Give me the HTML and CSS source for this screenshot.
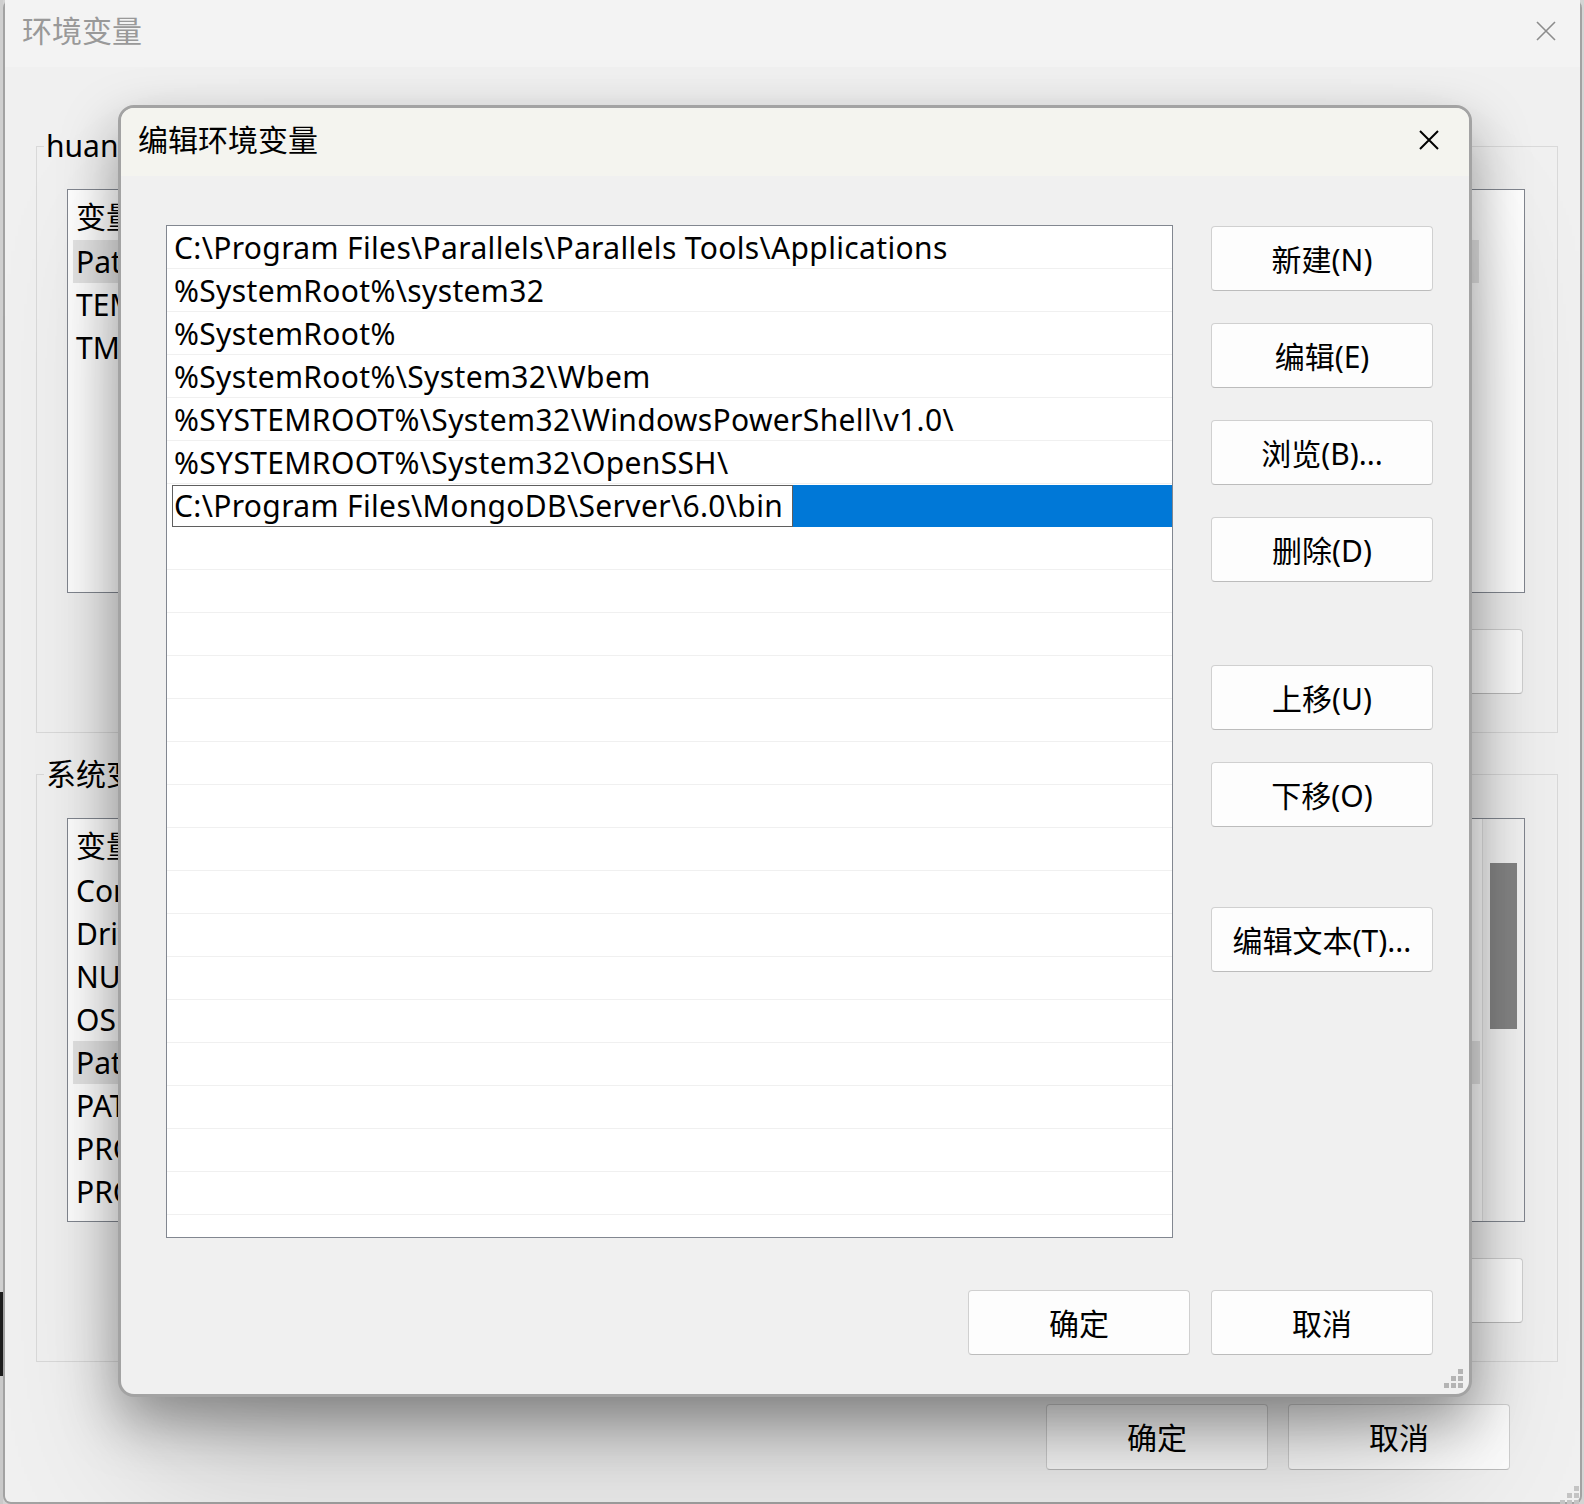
FILE: index.html
```html
<!DOCTYPE html>
<html>
<head>
    <meta charset="utf-8">
    <title>编辑环境变量</title>
    <link rel="stylesheet" href="styles.css">
</head>
<body>
    <div class="desk">
        <div class="desk-edge"></div>

        <!-- parent window: 环境变量 -->
        <div class="window">
            <div class="window-title">
                <span>环境变量</span>
                <svg class="close-icon" width="20" height="20" viewBox="0 0 20 20"><path d="M1 1L19 19M19 1L1 19"/></svg>
            </div>
            <div class="window-body">
                <fieldset class="group">
                    <legend>huang 的用户变量(U)</legend>
                    <div class="group-inner">
                        <div class="listview">
                            <div class="lv-rows user-rows">
                                <div class="lv-head">变量</div>
                                <div class="lv-row picked">Path</div>
                                <div class="lv-row">TEMP</div>
                                <div class="lv-row">TMP</div>
                            </div>
                        </div>
                        <div class="group-buttons">
                            <button>新建(N)...</button>
                            <button>编辑(E)...</button>
                            <button>删除(D)</button>
                        </div>
                    </div>
                </fieldset>

                <fieldset class="group group-system">
                    <legend>系统变量(S)</legend>
                    <div class="group-inner">
                        <div class="listview">
                            <div class="lv-rows">
                                <div class="lv-head">变量</div>
                                <div class="lv-row">ComSpec</div>
                                <div class="lv-row">DriverData</div>
                                <div class="lv-row">NUMBER_OF_PROCESSORS</div>
                                <div class="lv-row">OS</div>
                                <div class="lv-row picked">Path</div>
                                <div class="lv-row">PATHEXT</div>
                                <div class="lv-row">PROCESSOR_ARCHITECTURE</div>
                                <div class="lv-row">PROCESSOR_IDENTIFIER</div>
                            </div>
                            <div class="lv-scroll"><div class="lv-thumb"></div></div>
                        </div>
                        <div class="group-buttons">
                            <button>新建(W)...</button>
                            <button>编辑(I)...</button>
                            <button>删除(L)</button>
                        </div>
                    </div>
                </fieldset>

                <div class="window-foot">
                    <button>确定</button>
                    <button>取消</button>
                </div>
            </div>
            <svg class="grip grip-window" width="20" height="20" viewBox="0 0 20 20">
                <rect x="14" y="0" width="5" height="5"/>
                <rect x="7" y="7" width="5" height="5"/><rect x="14" y="7" width="5" height="5"/>
                <rect x="0" y="14" width="5" height="5"/><rect x="7" y="14" width="5" height="5"/><rect x="14" y="14" width="5" height="5"/>
            </svg>
        </div>

        <!-- modal: 编辑环境变量 -->
        <div class="dialog">
            <div class="dialog-title">
                <span>编辑环境变量</span>
                <svg class="close-icon dark" width="20" height="20" viewBox="0 0 20 20"><path d="M1 1L19 19M19 1L1 19"/></svg>
            </div>
            <div class="dialog-body">
                <div class="dialog-main">
                    <div class="path-list">
                        <div class="path-row">C:\Program Files\Parallels\Parallels Tools\Applications</div>
                        <div class="path-row">%SystemRoot%\system32</div>
                        <div class="path-row">%SystemRoot%</div>
                        <div class="path-row">%SystemRoot%\System32\Wbem</div>
                        <div class="path-row">%SYSTEMROOT%\System32\WindowsPowerShell\v1.0\</div>
                        <div class="path-row">%SYSTEMROOT%\System32\OpenSSH\</div>
                        <div class="path-row editing">
                            <div class="path-edit">C:\Program Files\MongoDB\Server\6.0\bin</div>
                            <div class="path-fill"></div>
                        </div>
                        <div class="path-row"></div>
                        <div class="path-row"></div>
                        <div class="path-row"></div>
                        <div class="path-row"></div>
                        <div class="path-row"></div>
                        <div class="path-row"></div>
                        <div class="path-row"></div>
                        <div class="path-row"></div>
                        <div class="path-row"></div>
                        <div class="path-row"></div>
                        <div class="path-row"></div>
                        <div class="path-row"></div>
                        <div class="path-row"></div>
                        <div class="path-row"></div>
                        <div class="path-row"></div>
                        <div class="path-row"></div>
                        <div class="path-row"></div>
                    </div>
                    <div class="side-buttons">
                        <button>新建(N)</button>
                        <button>编辑(E)</button>
                        <button>浏览(B)...</button>
                        <button>删除(D)</button>
                        <button class="move-up">上移(U)</button>
                        <button>下移(O)</button>
                        <button class="edit-text">编辑文本(T)...</button>
                    </div>
                </div>
                <div class="dialog-foot">
                    <button>确定</button>
                    <button>取消</button>
                </div>
            </div>
            <svg class="grip" width="20" height="20" viewBox="0 0 20 20">
                <rect x="14" y="0" width="5" height="5"/>
                <rect x="7" y="7" width="5" height="5"/><rect x="14" y="7" width="5" height="5"/>
                <rect x="0" y="14" width="5" height="5"/><rect x="7" y="14" width="5" height="5"/><rect x="14" y="14" width="5" height="5"/>
            </svg>
        </div>
    </div>
</body>
</html>
```

FILE: styles.css
```css
* {
    box-sizing: border-box;
}

html, body {
    margin: 0;
    padding: 0;
}

body {
    font-family: "Noto Sans", "Noto Sans CJK SC", sans-serif;
    font-size: 30px;
    color: #000;
    background: #d4d4d4;
    overflow: hidden;
}

button {
    font: inherit;
    color: #000;
    width: 222px;
    height: 65px;
    padding: 0 0 2px;
    background: #fdfdfd;
    border: 1px solid #d0d0d0;
    border-bottom-color: #bcbcbc;
    border-radius: 4px;
    white-space: nowrap;
}

.desk {
    position: relative;
    width: 1584px;
    height: 1504px;
    display: flex;
}

/* sliver of whatever sits behind the window */
.desk-edge {
    width: 3px;
    background: linear-gradient(#cfcfcf 0, #cfcfcf 1292px, #1c1c1c 1292px, #1c1c1c 1376px, #c9c9c9 1376px);
}

/* ---------- parent window ---------- */

.window {
    position: relative;
    width: 1579px;
    height: 1504px;
    display: flex;
    flex-direction: column;
    background: #f0f0f0;
    border: 2px solid #a2a2a2;
    border-top: none;
    border-radius: 8px;
}

.window-title {
    height: 67px;
    flex-shrink: 0;
    display: flex;
    align-items: center;
    justify-content: space-between;
    padding: 0 24px 6px 17px;
    background: #f3f3f3;
    color: #999;
    line-height: 1;
}

.close-icon path {
    fill: none;
    stroke: #8c8c8c;
    stroke-width: 1.6;
}

.close-icon.dark path {
    stroke: #000;
    stroke-width: 2;
}

.window-body {
    display: flex;
    flex-direction: column;
    padding: 0 22px 0 31px;
}

.group {
    margin: 59px 0 0;
    padding: 0;
    min-width: 0;
    border: 1px solid #d9d9d9;
}

.group-system {
    margin-top: 21px;
}

.group legend {
    margin-left: 7px;
    padding: 0 2px;
    line-height: 40px;
}

.group-inner {
    padding: 23px 32px 38px 30px;
}

.group-system .group-inner {
    padding-top: 24px;
}

.listview {
    height: 404px;
    display: flex;
    background: #fff;
    border: 1px solid #828790;
    overflow: hidden;
}

.lv-rows {
    flex: 1;
    padding-right: 2px;
}

.user-rows {
    padding-right: 45px;
}

.lv-head {
    height: 50px;
    line-height: 46px;
    padding: 4px 0 0 8px;
    white-space: nowrap;
}

.lv-row {
    height: 43px;
    line-height: 43px;
    margin-left: 5px;
    padding-left: 3px;
    white-space: nowrap;
}

.lv-row.picked {
    background: #e5e5e5;
}

.lv-scroll {
    width: 42px;
    flex-shrink: 0;
    padding: 44px 7px 0;
    background: #f4f4f4;
    border-left: 1px solid #e2e2e2;
}

.lv-thumb {
    height: 166px;
    background: #858585;
}

.group-buttons {
    margin-top: 36px;
    display: flex;
    justify-content: flex-end;
    gap: 20px;
    padding-right: 2px;
}

.window-foot {
    margin-top: 42px;
    display: flex;
    justify-content: flex-end;
    gap: 20px;
    padding-right: 48px;
}

.window-foot button {
    height: 66px;
}

.grip rect {
    fill: #b4b4b4;
}

.grip-window {
    position: absolute;
    right: 0;
    bottom: -4px;
}

.grip-window rect {
    fill: #c4c4c4;
}

/* ---------- modal dialog ---------- */

.dialog {
    position: absolute;
    left: 118px;
    top: 105px;
    width: 1354px;
    height: 1292px;
    display: flex;
    flex-direction: column;
    background: #f0f0f0;
    border: 3px solid #a3a3a3;
    border-radius: 16px;
    box-shadow: 0 24px 56px rgba(0, 0, 0, 0.36), 0 90px 140px -30px rgba(0, 0, 0, 0.2);
}

.dialog-title {
    height: 68px;
    flex-shrink: 0;
    display: flex;
    align-items: center;
    justify-content: space-between;
    padding: 0 30px 4px 17px;
    background: #f4f4ef;
    border-radius: 13px 13px 0 0;
    line-height: 1;
}

.dialog-body {
    padding: 49px 36px 0 45px;
}

.dialog-main {
    display: flex;
    gap: 38px;
}

.path-list {
    width: 1007px;
    height: 1013px;
    background: #fff;
    border: 1px solid #828790;
    overflow: hidden;
    letter-spacing: 0.35px;
}

.path-row {
    height: 43px;
    line-height: 43px;
    padding-left: 7px;
    border-bottom: 1px solid #f0f0f0;
    white-space: nowrap;
}

.path-row.editing {
    display: flex;
    padding: 1px 0 0 5px;
    border-bottom: none;
}

.path-edit {
    width: 621px;
    height: 42px;
    line-height: 40px;
    padding-left: 1px;
    border: 1px solid #5f5f5f;
    background: #fff;
}

.path-fill {
    flex: 1;
    background: #0078d7;
}

.side-buttons {
    display: flex;
    flex-direction: column;
    gap: 32px;
    padding-top: 1px;
}

.side-buttons .move-up {
    margin-top: 51px;
}

.side-buttons .edit-text {
    margin-top: 48px;
}

.dialog-foot {
    margin-top: 52px;
    display: flex;
    justify-content: flex-end;
    gap: 21px;
}

.dialog .grip {
    position: absolute;
    right: 5px;
    bottom: 5px;
}
```
